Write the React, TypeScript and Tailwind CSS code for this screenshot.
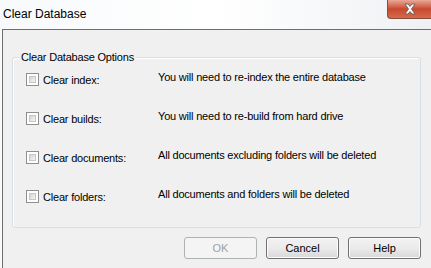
import React from "react";

const rows = [
  { label: "Clear index:", desc: "You will need to re-index the entire database" },
  { label: "Clear builds:", desc: "You will need to re-build from hard drive" },
  { label: "Clear documents:", desc: "All documents excluding folders will be deleted" },
  { label: "Clear folders:", desc: "All documents and folders will be deleted" },
];

function CheckBox() {
  return (
    <div className="w-[13px] h-[13px] border border-[#8f8f8f] bg-white p-[2px] shrink-0">
      <div className="w-full h-full border border-[#c6c6c6] bg-gradient-to-br from-[#d4d4d4] to-[#f6f6f6]" />
    </div>
  );
}

function DlgButton({ children, disabled }: { children: React.ReactNode; disabled?: boolean }) {
  return (
    <button
      className={
        disabled
          ? "w-[73px] h-[22px] rounded-[3px] border border-[#adb2b5] bg-[#f4f4f4] text-[#a0a0a0] text-[11px] font-normal leading-none"
          : "w-[73px] h-[22px] rounded-[3px] border border-[#707070] bg-gradient-to-b from-[#f2f2f2] via-[#ebebeb] to-[#d8d8d8] text-black text-[11px] font-normal leading-none shadow-[inset_0_0_0_1px_#fcfcfc]"
      }
    >
      {children}
    </button>
  );
}

export default function App() {
  return (
    <div
      className="w-[431px] h-[268px] overflow-hidden bg-gradient-to-r from-[#f7f9fb] via-white to-[#eef1f4] flex flex-col"
      style={{ fontFamily: '"Liberation Sans", Arial, sans-serif' }}
    >
      {/* title bar */}
      <div className="h-[29px] flex items-start shrink-0">
        <div className="pl-[3px] pt-[7px] text-[12px] text-black leading-[14px]">Clear Database</div>
        <div className="ml-auto w-[44px] h-[19px] rounded-bl-[4px] border border-t-0 border-r-0 border-[#8a4a3e] bg-gradient-to-b from-[#e9a896] via-[#c9472f] to-[#d36a4b] flex items-center justify-center">
          <svg width="14" height="12" viewBox="0 0 14 12">
            <path
              d="M2 1 L5 1 L7 3.5 L9 1 L12 1 L8.5 6 L12 11 L9 11 L7 8.5 L5 11 L2 11 L5.5 6 Z"
              fill="#ffffff"
              stroke="#6b5a5a"
              strokeWidth="0.9"
              strokeLinejoin="round"
            />
          </svg>
        </div>
      </div>

      {/* body */}
      <div className="ml-[2px] flex-1 border-l border-t border-[#6e6e6e] bg-[#f0f0f0] flex flex-col pl-[9px] pr-[10px] pt-[27px]">
        <div className="relative h-[171px] border border-[#d5dfe5] rounded-[3px] shadow-[inset_1px_1px_0_#ffffff] pl-[13px] pt-[15px]">
          <span className="absolute left-[6px] top-[-7px] bg-[#f0f0f0] px-[2px] text-[11px] tracking-[-0.2px] leading-[13px] text-black">
            Clear Database Options
          </span>
          <div className="flex flex-col gap-[26px]">
            {rows.map((r) => (
              <div key={r.label} className="flex items-center h-[13px]">
                <CheckBox />
                <span className="ml-[4px] w-[115px] text-[11px] tracking-[-0.2px] leading-[13px] text-black pt-[1px]">{r.label}</span>
                <span className="text-[11px] tracking-[-0.2px] leading-[13px] text-black mt-[-4px]">{r.desc}</span>
              </div>
            ))}
          </div>
        </div>
        <div className="flex justify-end gap-[9px] mt-[9px]">
          <DlgButton disabled>OK</DlgButton>
          <DlgButton>Cancel</DlgButton>
          <DlgButton>Help</DlgButton>
        </div>
      </div>
    </div>
  );
}
